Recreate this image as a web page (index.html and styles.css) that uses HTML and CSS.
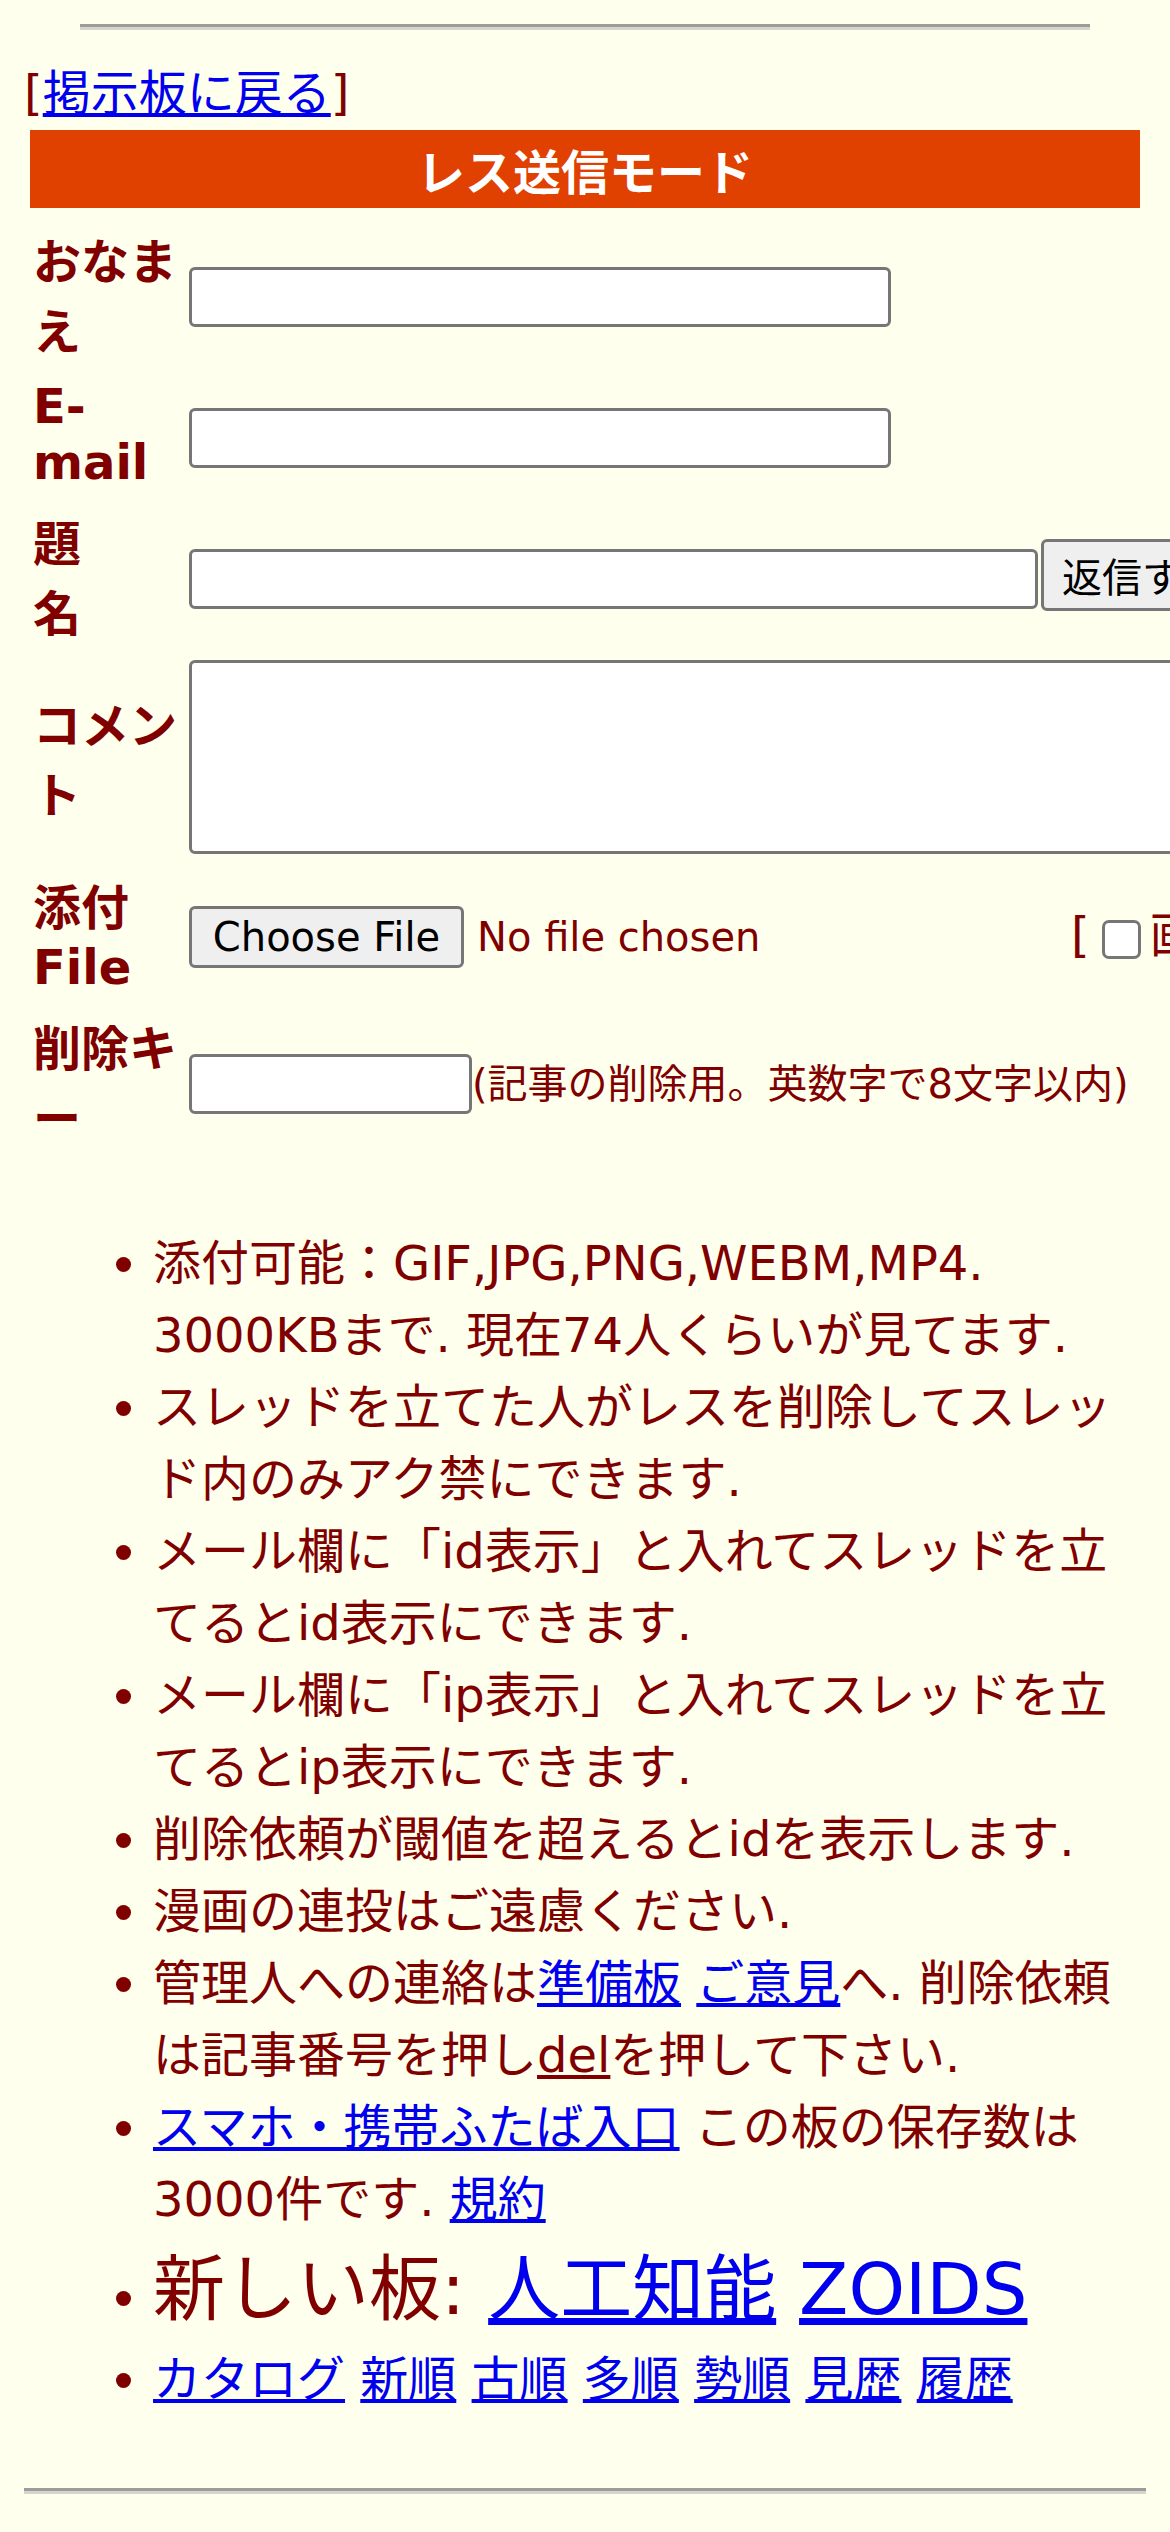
FILE: index.html
```html
<!DOCTYPE html>
<html lang="ja">
<head>
<meta charset="utf-8">
<title>レス送信モード</title>
<link rel="stylesheet" href="styles.css">
</head>
<body>
<div class="page">
<hr class="hr-top">
<div class="back">[<a href="#">掲示板に戻る</a>]</div>
<div class="mode-wrap"><div class="mode-bar">レス送信モード</div></div>
<form class="post-form">
<table class="ftbl">
  <tr>
    <td class="flabel">おなまえ</td>
    <td class="ffield"><input type="text" class="in-text in-name"></td>
  </tr>
  <tr>
    <td class="flabel">E-mail</td>
    <td class="ffield"><input type="text" class="in-text in-name"></td>
  </tr>
  <tr>
    <td class="flabel">題　　名</td>
    <td class="ffield"><input type="text" class="in-text in-sub"><button type="button" class="btn-submit">返信する</button></td>
  </tr>
  <tr>
    <td class="flabel">コメント</td>
    <td class="ffield"><textarea class="in-com"></textarea></td>
  </tr>
  <tr>
    <td class="flabel">添付File</td>
    <td class="ffield"><span class="file-box"><button type="button" class="btn-file">Choose File</button><span class="file-none">No file chosen</span></span><span class="textonly">[<input type="checkbox" class="chk">画像なし]</span></td>
  </tr>
  <tr>
    <td class="flabel">削除キー</td>
    <td class="ffield"><input type="password" class="in-text in-pwd"><span class="pwd-note">(記事の削除用。英数字で8文字以内)</span></td>
  </tr>
</table>
<div class="notes">
  <ul>
    <li>添付可能：GIF,JPG,PNG,WEBM,MP4. 3000KBまで. 現在74人くらいが見てます.</li>
    <li>スレッドを立てた人がレスを削除してスレッド内のみアク禁にできます.</li>
    <li>メール欄に「id表示」と入れてスレッドを立てるとid表示にできます.</li>
    <li>メール欄に「ip表示」と入れてスレッドを立てるとip表示にできます.</li>
    <li>削除依頼が閾値を超えるとidを表示します.</li>
    <li>漫画の連投はご遠慮ください.</li>
    <li>管理人への連絡は<a href="#">準備板</a> <a href="#">ご意見</a>へ. 削除依頼は記事番号を押し<a href="#" class="del">del</a>を押して下さい.</li>
    <li><a href="#">スマホ・携帯ふたば入口</a> この板の保存数は3000件です. <a href="#">規約</a></li>
    <li><span class="big">新しい板: <a href="#">人工知能</a> <a href="#">ZOIDS</a></span></li>
    <li><a href="#">カタログ</a> <a href="#">新順</a> <a href="#">古順</a> <a href="#">多順</a> <a href="#">勢順</a> <a href="#">見歴</a> <a href="#">履歴</a></li>
  </ul>
</div>
</form>
<hr class="hr-bottom">
</div>
</body>
</html>
```
FILE: styles.css
```css
html,
body {
  margin: 0;
  padding: 0;
}
body {
  background: #ffffee;
  color: #800000;
  font-family: "DejaVu Sans", "Noto Sans CJK JP", sans-serif;
  font-size: 48px;
}
.page {
  padding: 24px;
}
a {
  color: #0000ee;
  text-decoration: underline;
}
a.del {
  color: #800000;
}
.hr-top,
.hr-bottom {
  height: 0;
  border: 0;
  border-top: 3px solid #9b9b9b;
  border-bottom: 3px solid #d6d6ce;
}
.hr-top {
  width: 90%;
  margin: 0 auto 24px;
}
.hr-bottom {
  margin: 24px 0 0;
}
.back {
  margin: 0;
}
.mode-wrap {
  padding: 6px;
}
.mode-bar {
  background: #e04000;
  color: #ffffff;
  font-weight: bold;
  text-align: center;
  padding: 4px 3px;
}
.post-form {
  margin: 0;
}
.ftbl {
  border-collapse: separate;
  border-spacing: 3px;
  margin: 0;
}
.flabel {
  width: 145px;
  padding: 6px 5px 6px 6px;
  font-weight: bold;
  vertical-align: middle;
}
.ffield {
  padding: 6px 6px 6px 4px;
  white-space: nowrap;
  vertical-align: middle;
}
input,
textarea,
button {
  margin: 0;
  box-sizing: border-box;
  font-family: "DejaVu Sans", "Noto Sans CJK JP", sans-serif;
  vertical-align: middle;
}
.in-text {
  height: 60px;
  border: 3px solid #767676;
  border-radius: 6px;
  background: #ffffff;
  padding: 0 6px;
  margin-top: 7px;
}
.in-name {
  width: 702px;
}
.in-sub {
  width: 849px;
}
.in-pwd {
  width: 283px;
}
.btn-submit,
.btn-file {
  font-size: 40px;
  color: #000000;
  background: #efefef;
  border: 3px solid #767676;
  border-radius: 6px;
  padding: 0 18px;
}
.btn-submit {
  margin-left: 3px;
  height: 72px;
  width: 230px;
  text-align: left;
}
.in-com {
  width: 1300px;
  height: 194px;
  border: 3px solid #767676;
  border-radius: 6px;
  background: #ffffff;
  resize: none;
  display: inline-block;
}
.file-box {
  display: inline-flex;
  align-items: center;
  width: 882px;
  vertical-align: middle;
  margin-top: 10px;
}
.btn-file {
  width: 275px;
  height: 62px;
}
.file-none {
  margin-left: 13px;
  font-size: 40px;
}
.textonly {
  vertical-align: middle;
}
.chk {
  appearance: none;
  -webkit-appearance: none;
  width: 39px;
  height: 39px;
  margin: 9px 9px 9px 12px;
  border: 3px solid #767676;
  border-radius: 7px;
  background: #ffffff;
}
.pwd-note {
  font-size: 40px;
  vertical-align: middle;
}
.notes {
  padding: 6px 6px 9px 9px;
}
.notes ul {
  margin: 62px 0 40px;
  padding-left: 120px;
  line-height: 1.5;
}
.big {
  font-size: 72px;
}
```
